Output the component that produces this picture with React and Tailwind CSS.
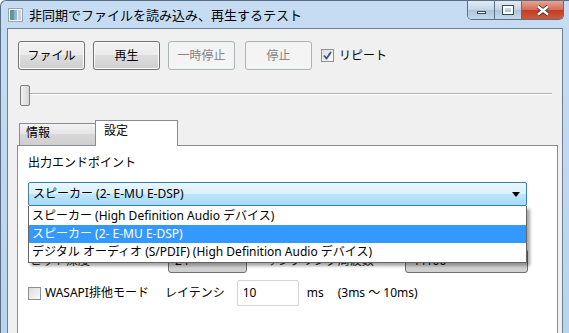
import React from "react";

const FONT = "font-['Noto_Sans','Noto_Sans_CJK_JP',sans-serif]";

function WinButton({ children, disabled }) {
  return (
    <button
      className={`w-[67px] h-[29px] rounded-[3px] border text-[12px] leading-none ${
        disabled
          ? "border-[#adb2b5] bg-[#f4f4f4] text-[#838383]"
          : "border-[#707070] bg-[linear-gradient(#f2f2f2_0%,#ebebeb_50%,#dddddd_50%,#cfcfcf_100%)] text-black shadow-[inset_0_0_0_1px_#fcfcfc]"
      }`}
    >
      {children}
    </button>
  );
}

function CheckBox({ checked }) {
  return (
    <span className="w-[13px] h-[13px] border border-[#8e8f8f] bg-[linear-gradient(135deg,#dcdcdc,#fbfbfb)] flex items-center justify-center shrink-0">
      {checked && (
        <svg width="9" height="9" viewBox="0 0 9 9">
          <path d="M1 4.5 L3.5 7.5 L8 1" fill="none" stroke="#3c4f8f" strokeWidth="1.8" />
        </svg>
      )}
    </span>
  );
}

export default function App() {
  const items = [
    "スピーカー (High Definition Audio デバイス)",
    "スピーカー (2- E-MU E-DSP)",
    "デジタル オーディオ (S/PDIF) (High Definition Audio デバイス)",
  ];

  return (
    <div className={`${FONT} w-[569px] h-[333px] overflow-hidden bg-[linear-gradient(180deg,#c6dcf3,#b9d3ee)] rounded-tl-[6px] border-l border-t border-[#5a6f86] flex flex-col`}>
      {/* Title bar */}
      <div className="h-[27px] flex items-start shrink-0 relative">
        <div className="flex items-center mt-[7px] ml-[7px]">
          <svg width="15" height="14" viewBox="0 0 15 14">
            <rect x="0.5" y="0.5" width="14" height="13" fill="#f4f6f8" stroke="#9aa3ad" />
            <rect x="2" y="2" width="4" height="10" fill="#5d9a8e" />
            <rect x="6" y="2" width="3" height="10" fill="#8fb6d8" />
            <rect x="10" y="2" width="3" height="10" fill="#c9d3dc" />
          </svg>
          <span className="ml-[6px] text-[13px] text-black leading-none">
            非同期でファイルを読み込み、再生するテスト
          </span>
        </div>
        <div className="ml-auto mr-[5px] flex h-[19px] rounded-b-[5px] overflow-hidden border border-t-0 border-[#5b6f86]">
          <div className="w-[27px] bg-[linear-gradient(#e3ecf5,#c3d4e6_50%,#aec3da_50%,#c5d7ea)] border-r border-[#5b6f86] flex items-center justify-center">
            <span className="w-[9px] h-[3px] mt-[5px] bg-white border border-[#3a4a5d]" />
          </div>
          <div className="w-[27px] bg-[linear-gradient(#e3ecf5,#c3d4e6_50%,#aec3da_50%,#c5d7ea)] border-r border-[#5b6f86] flex items-center justify-center">
            <span className="w-[10px] h-[8px] border-2 border-white outline outline-1 outline-[#3a4a5d]" />
          </div>
          <div className="w-[41px] bg-[linear-gradient(#e8a493,#d36b55_50%,#c03e22_50%,#d1583b)] flex items-center justify-center">
            <svg width="14" height="11" viewBox="0 0 14 11">
              <path d="M2 1.5 L12 9.5 M12 1.5 L2 9.5" stroke="#3a2a28" strokeWidth="4" />
              <path d="M2 1.5 L12 9.5 M12 1.5 L2 9.5" stroke="#ffffff" strokeWidth="2.4" />
            </svg>
          </div>
        </div>
      </div>

      {/* Client area */}
      <div className="flex-1 ml-[6px] mr-[6px] border border-[#6d7f93] bg-[#f0f0f0] pl-[10px] pt-[12px] text-[12px] text-black">
        {/* Buttons */}
        <div className="flex items-center gap-[8px]">
          <WinButton>ファイル</WinButton>
          <WinButton>再生</WinButton>
          <WinButton disabled>一時停止</WinButton>
          <div className="ml-[2px]">
            <WinButton disabled>停止</WinButton>
          </div>
          <div className="flex items-center gap-[5px] ml-[1px]">
            <CheckBox checked />
            <span>リピート</span>
          </div>
        </div>

        {/* Slider */}
        <div className="relative h-[21px] w-[532px] ml-[2px] mt-[15px]">
          <div className="absolute left-0 right-0 top-[8px] h-[2px] border-t border-[#b0b0b0] bg-white" />
          <div className="absolute left-0 top-0 w-[10px] h-[21px] rounded-[2px] border border-[#7d7d7d] bg-[linear-gradient(90deg,#f2f2f2,#d6d6d6)]" />
        </div>

        {/* Tabs */}
        <div className="ml-[-1px] mt-[13px] flex items-end h-[26px] relative z-10">
          <div className="ml-[2px] w-[77px] h-[22px] border border-b-0 border-[#898c95] bg-[linear-gradient(#f3f3f3,#e4e4e4_50%,#d8d8d8_50%,#cfcfcf)] pl-[6px] pt-[3px] leading-none">
            情報
          </div>
          <div className="ml-[-1px] w-[83px] h-[26px] border border-b-0 border-[#898c95] bg-white pl-[8px] pt-[4px] leading-none mb-[-1px]">
            設定
          </div>
        </div>
        <div className="ml-[-1px] w-[541px] h-[200px] border border-[#898c95] bg-white pl-[10px] pt-[11px] relative">
          <div className="leading-none">出力エンドポイント</div>

          {/* Combobox */}
          <div className="relative mt-[13px] w-[499px]">
            <div className="h-[24px] rounded-[2px] border border-[#3c7fb1] bg-[linear-gradient(#eaf6fd,#d9f0fc_50%,#bee6fd_50%,#a7d9f5)] flex items-center pl-[4px] pr-[6px]">
              <span>スピーカー (2- E-MU E-DSP)</span>
              <svg className="ml-auto" width="8" height="5" viewBox="0 0 8 5">
                <path d="M0 0 H8 L4 5 Z" fill="#000" />
              </svg>
            </div>

            {/* Dropdown list */}
            <div className="absolute left-0 top-[24px] w-[499px] bg-white border border-[#646464] border-t-0 shadow-[3px_3px_3px_rgba(0,0,0,0.35)] z-20 py-[1px]">
              {items.map((t, i) => (
                <div
                  key={i}
                  className={`h-[18px] flex items-center pl-[3px] ${i === 1 ? "bg-[#3399ff] text-white" : ""}`}
                >
                  {t}
                </div>
              ))}
            </div>
          </div>

          {/* Row partly hidden under the dropdown */}
          <div className="mt-[43px] flex items-center h-[24px]">
            <span className="w-[140px] pl-[2px] text-[#222]">ビット深度</span>
            <div className="w-[79px] h-[24px] rounded-[3px] border border-[#707070] bg-[linear-gradient(#f2f2f2,#ebebeb_50%,#dddddd_50%,#cfcfcf)] flex items-center pl-[6px]">
              24
            </div>
            <span className="ml-[19px] w-[139px] text-[#222]">サンプリング周波数</span>
            <div className="w-[123px] h-[24px] rounded-[3px] border border-[#707070] bg-[linear-gradient(#f2f2f2,#ebebeb_50%,#dddddd_50%,#cfcfcf)] flex items-center pl-[6px]">
              44100
            </div>
          </div>

          {/* WASAPI row */}
          <div className="mt-[7px] flex items-center h-[26px]">
            <CheckBox />
            <span className="ml-[4px]">WASAPI排他モード</span>
            <span className="ml-[16px]">レイテンシ</span>
            <div className="ml-[12px] w-[62px] h-[26px] border border-[#d5d5d5] rounded-[2px] bg-white flex items-center pl-[5px]">
              10
            </div>
            <span className="ml-[8px]">ms</span>
            <span className="ml-[14px]">(3ms ～ 10ms)</span>
          </div>
        </div>
      </div>
    </div>
  );
}
